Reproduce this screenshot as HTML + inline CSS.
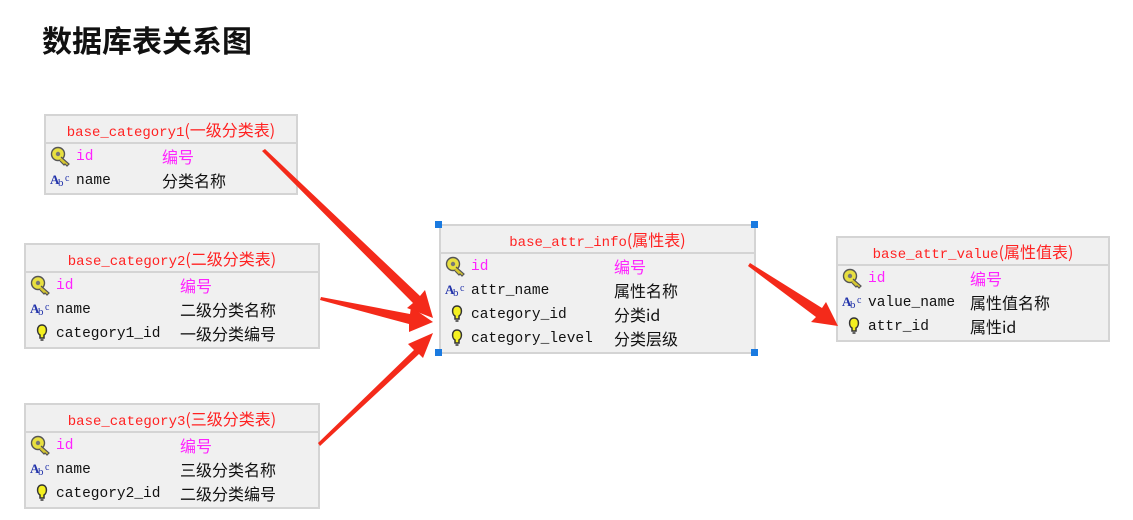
<!DOCTYPE html>
<html><head><meta charset="utf-8"><style>
body{margin:0;width:1133px;height:520px;background:#fff;position:relative;overflow:hidden;font-family:"Liberation Mono","Noto Sans CJK SC",monospace}
.t{position:absolute;left:42px;top:17px;font:bold 30px "Liberation Sans","Noto Sans CJK SC",sans-serif;color:#111}
.b{position:absolute;background:#f0f0f0;border:2px solid #d4d4d4;box-sizing:border-box}
.h{height:26px;border-bottom:2px solid #d4d4d4;text-align:center;color:#f22;font-size:14px;line-height:26px;font-family:"Liberation Mono","Noto Sans CJK SC",monospace;white-space:nowrap}
.h span{font-family:"Noto Sans CJK SC",sans-serif;font-size:16px}
.r{position:relative;height:24px;font-size:14.5px;line-height:26px;color:#111}
.r .n{position:absolute;left:30px}
.r .c{position:absolute;font-family:"Noto Sans CJK SC",sans-serif;font-size:16px;line-height:24px}
.p{color:#f2f}
.i{position:absolute;left:4px;top:2px}
.hd{position:absolute;width:7px;height:7px;background:#1a7ae0}
</style></head><body>
<div class="t">数据库表关系图</div>
<svg width="0" height="0" style="position:absolute"><defs>
<g id="k"><circle cx="8" cy="8" r="6.5" fill="#e8e040" stroke="#555" stroke-width="1.4"/><circle cx="8" cy="8" r="2.2" fill="#777"/><path d="M11 11 L19 18 L17 20 L15 18 L14 19 L10 15" fill="#d8c830" stroke="#555" stroke-width="1.2"/></g>
<g id="a"><text x="0" y="14" font-family="Liberation Serif" font-size="13" fill="#2233aa" font-weight="bold">A</text><text x="8" y="16" font-family="Liberation Serif" font-size="11" fill="#2233aa">b</text><text x="15" y="11" font-family="Liberation Serif" font-size="10" fill="#2233aa">c</text></g>
<g id="u"><path d="M6 2 C0.5 2 0.5 10 4 12 L4 15 L8 15 L8 12 C11.5 10 11.5 2 6 2Z" fill="#f4f020" stroke="#333" stroke-width="1.5"/><path d="M4.5 17 L7.5 17" stroke="#333" stroke-width="1.5"/></g>
</defs></svg>

<div class="b" style="left:44px;top:114px;width:254px;height:81px">
<div class="h">base_category1<span>(一级分类表)</span></div>
<div class="r"><svg class="i" width="22" height="22"><use href="#k"/></svg><span class="n p">id</span><span class="c p" style="left:116px">编号</span></div>
<div class="r"><svg class="i" width="26" height="20"><use href="#a"/></svg><span class="n">name</span><span class="c" style="left:116px">分类名称</span></div>
</div>

<div class="b" style="left:24px;top:243px;width:296px;height:106px">
<div class="h">base_category2<span>(二级分类表)</span></div>
<div class="r"><svg class="i" width="22" height="22"><use href="#k"/></svg><span class="n p">id</span><span class="c p" style="left:154px">编号</span></div>
<div class="r"><svg class="i" width="26" height="20"><use href="#a"/></svg><span class="n">name</span><span class="c" style="left:154px">二级分类名称</span></div>
<div class="r"><svg class="i" style="left:10px" width="14" height="20"><use href="#u"/></svg><span class="n">category1_id</span><span class="c" style="left:154px">一级分类编号</span></div>
</div>

<div class="b" style="left:24px;top:403px;width:296px;height:106px">
<div class="h">base_category3<span>(三级分类表)</span></div>
<div class="r"><svg class="i" width="22" height="22"><use href="#k"/></svg><span class="n p">id</span><span class="c p" style="left:154px">编号</span></div>
<div class="r"><svg class="i" width="26" height="20"><use href="#a"/></svg><span class="n">name</span><span class="c" style="left:154px">三级分类名称</span></div>
<div class="r"><svg class="i" style="left:10px" width="14" height="20"><use href="#u"/></svg><span class="n">category2_id</span><span class="c" style="left:154px">二级分类编号</span></div>
</div>

<div class="b" style="left:439px;top:224px;width:317px;height:130px">
<div class="h">base_attr_info<span>(属性表)</span></div>
<div class="r"><svg class="i" width="22" height="22"><use href="#k"/></svg><span class="n p">id</span><span class="c p" style="left:173px">编号</span></div>
<div class="r"><svg class="i" width="26" height="20"><use href="#a"/></svg><span class="n">attr_name</span><span class="c" style="left:173px">属性名称</span></div>
<div class="r"><svg class="i" style="left:10px" width="14" height="20"><use href="#u"/></svg><span class="n">category_id</span><span class="c" style="left:173px">分类id</span></div>
<div class="r"><svg class="i" style="left:10px" width="14" height="20"><use href="#u"/></svg><span class="n">category_level</span><span class="c" style="left:173px">分类层级</span></div>
</div>
<div class="hd" style="left:435px;top:221px"></div><div class="hd" style="left:751px;top:221px"></div>
<div class="hd" style="left:435px;top:349px"></div><div class="hd" style="left:751px;top:349px"></div>

<div class="b" style="left:836px;top:236px;width:274px;height:106px">
<div class="h">base_attr_value<span>(属性值表)</span></div>
<div class="r"><svg class="i" width="22" height="22"><use href="#k"/></svg><span class="n p">id</span><span class="c p" style="left:132px">编号</span></div>
<div class="r"><svg class="i" width="26" height="20"><use href="#a"/></svg><span class="n">value_name</span><span class="c" style="left:132px">属性值名称</span></div>
<div class="r"><svg class="i" style="left:10px" width="14" height="20"><use href="#u"/></svg><span class="n">attr_id</span><span class="c" style="left:132px">属性id</span></div>
</div>

<svg width="1133" height="520" style="position:absolute;left:0;top:0;pointer-events:none">
<g fill="#f42a1a">
<polygon points="262,151 265,149 420,296 425,290 433,318 407,308 413,303"/>
<polygon points="320,300 321,297 410,314 411,307 433,322 409,332 409,324"/>
<polygon points="320,446 318,443 414,350 408,344 433,333 423,358 419,354"/>
<polygon points="748,266 750,263 822,308 826,302 838,326 811,322 816,317"/>
</g>
</svg>
</body></html>
